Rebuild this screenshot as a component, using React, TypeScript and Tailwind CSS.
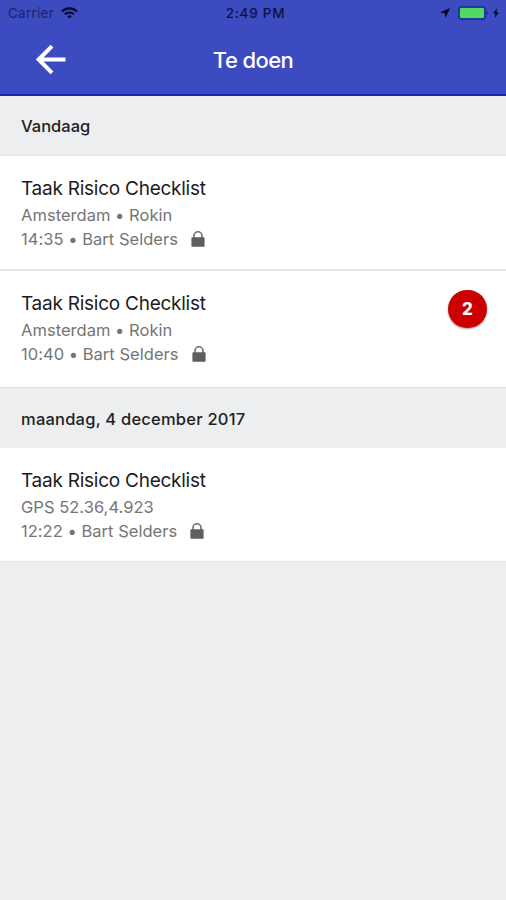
import clsx from "clsx";

type Task = {
  key: number;
  title: string;
  location: string;
  time: string;
  person: string;
  badge?: number;
  className: string;
};

// Tasks of today and of the earlier day
const today: Task[] = [
  { key: 1, title: "Taak Risico Checklist", location: "Amsterdam • Rokin", time: "14:35", person: "Bart Selders", className: "h-[115px] border-b-2 pt-5" },
  { key: 2, title: "Taak Risico Checklist", location: "Amsterdam • Rokin", time: "10:40", person: "Bart Selders", badge: 2, className: "h-[116px] pt-5" },
];

const earlier: Task[] = [
  { key: 3, title: "Taak Risico Checklist", location: "GPS 52.36,4.923", time: "12:22", person: "Bart Selders", className: "h-[114px] border-b pt-5" },
];

function LockIcon() {
  return (
    <svg width="14" height="16" viewBox="0 0 14 16" className="ml-[13px] shrink-0">
      <path d="M3 7.5V4.8a4 4 0 0 1 8 0V7.5" fill="none" stroke="#6b6b6b" strokeWidth="1.6" />
      <rect x="0.4" y="6.2" width="13.2" height="9.6" rx="0.8" fill="#5e5e5e" />
    </svg>
  );
}

function StatusBar() {
  return (
    <div className="h-[27px] grid grid-cols-3 items-center pl-2 pr-[7px] text-[13.5px] text-[#10164f]">
      <div className="flex items-center gap-[7px]">
        <span className="tracking-[0.25px] text-[#1b2368]">Carrier</span>
        <svg width="17" height="12" viewBox="0 0 17 12" fill="none" stroke="#070a24" strokeWidth="2.1" className="mb-px">
          <path d="M1 4.4a10.7 10.7 0 0 1 15 0" />
          <path d="M3.9 7.3a6.6 6.6 0 0 1 9.2 0" />
          <path d="M8.5 11.6 6.2 9.3a3.3 3.3 0 0 1 4.6 0z" fill="#070a24" stroke="none" />
        </svg>
      </div>
      <span className="text-center pl-1 tracking-[0.75px] font-medium text-[#0c1144]">2:49 PM</span>
      <div className="flex items-center justify-end pb-px">
        <svg width="10" height="10" viewBox="0 0 10 10" fill="#070a24" className="mr-2">
          <path d="M10 0 0 4.4l4.7.8L5.6 10z" />
        </svg>
        <svg width="31" height="14" viewBox="0 0 31 14" className="mr-[4px]">
          <rect x="0.8" y="0.8" width="26.4" height="12.4" rx="2.8" fill="none" stroke="#1e2a85" strokeWidth="1.3" />
          <rect x="2" y="2" width="24" height="10" rx="1.2" fill="#4fda65" />
          <path d="M28.5 4.8c1.8.6 1.8 3.8 0 4.4z" fill="#1e2a85" />
        </svg>
        <svg width="6" height="10" viewBox="0 0 6 10" fill="#070a24">
          <path d="M4 0 0 5.6h2.4L1.8 10 6 4.2H3.6z" />
        </svg>
      </div>
    </div>
  );
}

function SectionHeader({ label, className }: { label: string; className: string }) {
  return (
    <div className={clsx("flex items-center px-[21px] bg-[#eceeef] text-[#1f1f1f] text-[16.5px] font-medium", className)}>
      {label}
    </div>
  );
}

function TaskRow({ task }: { task: Task }) {
  return (
    <div className={clsx("flex justify-between bg-white border-[#e6e7e8] pl-[21px] pr-[19px]", task.className)}>
      <div>
        <h2 className="text-[19px] leading-[26px] tracking-[-0.25px] text-[#1c1c1c]">{task.title}</h2>
        <p className="text-[16.5px] leading-[25px] tracking-[0.03px] text-[#757575] mt-[1px]">{task.location}</p>
        <div className="flex items-center -mt-px text-[16.5px] leading-6 tracking-[0.03px] text-[#757575]">
          <span>{task.time} • {task.person}</span>
          <LockIcon />
        </div>
      </div>
      {task.badge && (
        <div className="-mt-px pt-0.5 w-[39px] h-[38px] rounded-full bg-[#cc0000] shadow-[0_1px_2px_rgba(0,0,0,0.4)] text-white text-[17px] font-extrabold flex items-center justify-center">
          {task.badge}
        </div>
      )}
    </div>
  );
}

export default function App() {
  return (
    <div className="w-full h-screen overflow-hidden bg-[#eceeef] font-['Inter',sans-serif]">
      {/* Top bar */}
      <header className="h-24 bg-[#3c4bc0] border-b-2 border-[#1528ac]">
        <StatusBar />
        <div className="h-[66px] grid grid-cols-3 items-center">
          <svg width="30" height="30" viewBox="0 0 30 30" fill="none" stroke="#fff" strokeWidth="4" className="ml-9">
            <path d="M29.5 14.5H3M16 1.2 2.7 14.5 16 27.8" />
          </svg>
          <h1 className="text-center text-white text-[22px] tracking-[-0.6px] font-medium">Te doen</h1>
        </div>
      </header>

      {/* Task list */}
      <SectionHeader label="Vandaag" className="h-[60px] pt-0.5 border-b border-[#e4e6e7]" />
      {today.map((task) => (
        <TaskRow key={task.key} task={task} />
      ))}
      <SectionHeader label="maandag, 4 december 2017" className="h-[61px] pt-0.5 tracking-[0.22px] border-t border-[#e0e2e3]" />
      {earlier.map((task) => (
        <TaskRow key={task.key} task={task} />
      ))}
    </div>
  );
}
